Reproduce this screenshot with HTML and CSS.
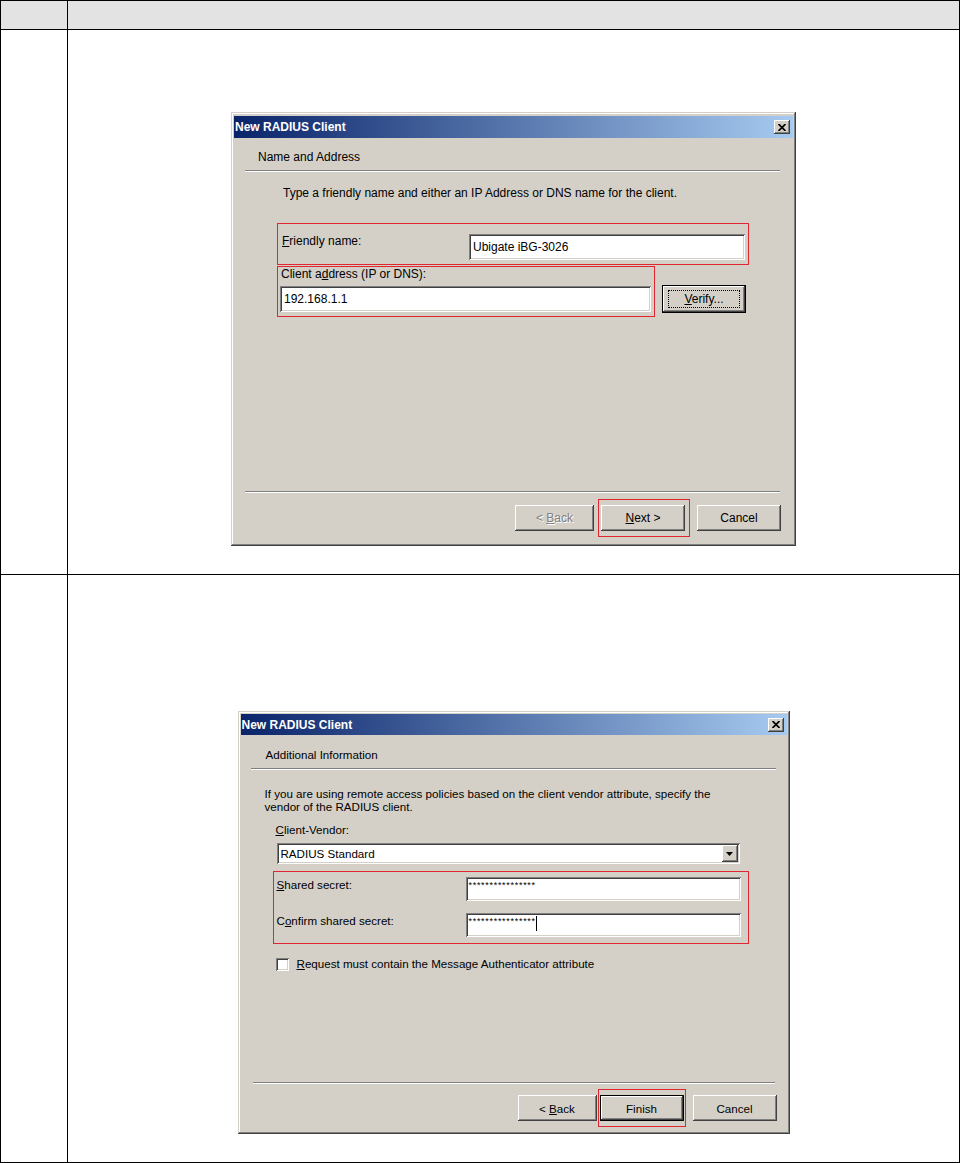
FILE: index.html
```html
<!DOCTYPE html>
<html lang="en">
<head>
    <meta charset="UTF-8">
    <title>New RADIUS Client</title>
    <link rel="stylesheet" href="styles.css">
</head>
<body>

    <div class="doc">
        <!-- Header row -->
        <div class="cell cell-no head"></div>
        <div class="cell head"></div>

        <!-- Step: name and address -->
        <div class="cell cell-no"></div>
        <div class="cell step step-addr">
            <div class="dialog dialog-addr">
                <div class="titlebar">
                    <span>New RADIUS Client</span>
                    <span class="close">
                        <svg width="8" height="7" viewBox="0 0 8 7"><path d="M0.5 0 L7.5 7 M7.5 0 L0.5 7" stroke="#000" stroke-width="1.7"/></svg>
                    </span>
                </div>
                <div class="wiz-head">Name and Address</div>
                <div class="etched"></div>

                <p class="intro">Type a friendly name and either an IP Address or DNS name for the client.</p>

                <div class="mark mark-name">
                    <span class="label"><u>F</u>riendly name:</span>
                    <div class="field field-name">Ubigate iBG-3026</div>
                </div>

                <div class="addr-row">
                    <div class="mark mark-addr">
                        <span class="label">Client a<u>d</u>dress (IP or DNS):</span>
                        <div class="field field-addr">192.168.1.1</div>
                    </div>
                    <button class="btn btn-default btn-verify"><span class="focus-ring"><span><u>V</u>erify...</span></span></button>
                </div>

                <div class="spacer"></div>
                <div class="etched etched-foot"></div>
                <div class="buttons">
                    <button class="btn btn-back" disabled><span>&lt; <u>B</u>ack</span></button>
                    <span class="mark mark-btn mark-next"><button class="btn btn-wide"><span><u>N</u>ext &gt;</span></button></span>
                    <button class="btn btn-wide btn-cancel"><span>Cancel</span></button>
                </div>
            </div>
        </div>

        <!-- Step: additional information -->
        <div class="cell cell-no last"></div>
        <div class="cell step step-info last">
            <div class="dialog dialog-info">
                <div class="titlebar">
                    <span>New RADIUS Client</span>
                    <span class="close">
                        <svg width="8" height="7" viewBox="0 0 8 7"><path d="M0.5 0 L7.5 7 M7.5 0 L0.5 7" stroke="#000" stroke-width="1.7"/></svg>
                    </span>
                </div>
                <div class="wiz-head">Additional Information</div>
                <div class="etched"></div>

                <p class="desc">If you are using remote access policies based on the client vendor attribute, specify the<br>vendor of the RADIUS client.</p>

                <div class="vendor-label"><u>C</u>lient-Vendor:</div>
                <div class="field select">
                    <span>RADIUS Standard</span>
                    <span class="select-arrow">
                        <svg width="7" height="4" viewBox="0 0 7 4"><path d="M0 0 H7 L3.5 4 Z" fill="#000"/></svg>
                    </span>
                </div>

                <div class="mark mark-secret">
                    <div class="secret-row">
                        <span class="label"><u>S</u>hared secret:</span>
                        <div class="field field-secret"><span class="dots">****************</span></div>
                    </div>
                    <div class="secret-row">
                        <span class="label">C<u>o</u>nfirm shared secret:</span>
                        <div class="field field-secret"><span class="dots">****************</span><span class="caret"></span></div>
                    </div>
                </div>

                <div class="check-row">
                    <span class="checkbox"></span>
                    <span class="label"><u>R</u>equest must contain the Message Authenticator attribute</span>
                </div>

                <div class="spacer"></div>
                <div class="etched etched-foot"></div>
                <div class="buttons">
                    <button class="btn btn-back"><span>&lt; <u>B</u>ack</span></button>
                    <span class="mark mark-btn mark-finish"><button class="btn btn-wide btn-default"><span>Finish</span></button></span>
                    <button class="btn btn-wide btn-cancel"><span>Cancel</span></button>
                </div>
            </div>
        </div>
    </div>

</body>
</html>
```

FILE: styles.css
```css
* {
    box-sizing: border-box;
}

html, body {
    margin: 0;
    height: 100%;
}

body {
    background: #fff;
    color: #000;
    font-family: "Liberation Sans", Arial, sans-serif;
    font-size: 12px;
}

p {
    margin: 0;
}

/*--------------------
Table
--------------------*/
.doc {
    display: grid;
    grid-template-columns: 67px 1fr;
    grid-template-rows: 29px 545px 1fr;
    width: 960px;
    height: 1163px;
    border: 1px solid #000;
}

.cell {
    border-bottom: 1px solid #000;
}

.cell-no {
    border-right: 1px solid #000;
}

.head {
    background: #e3e3e3;
}

.last {
    border-bottom: none;
}

.step {
    display: flex;
    flex-direction: column;
    align-items: center;
}

.step-addr {
    padding-top: 82px;
}

.step-info {
    padding-top: 136px;
}

/*--------------------
Dialog window
--------------------*/
.dialog {
    display: flex;
    flex-direction: column;
    background: #d4d0c8;
    padding: 4px 3px 3px;
    box-shadow: inset -1px -1px #404040, inset 1px 1px #d4d0c8, inset -2px -2px #808080, inset 2px 2px #fff;
}

.dialog-addr {
    width: 565px;
    height: 434px;
}

.dialog-info {
    width: 552px;
    height: 423px;
    padding-top: 3px;
    font-size: 11.6px;
}

.titlebar {
    display: flex;
    align-items: center;
    justify-content: space-between;
    height: 22px;
    padding: 0 3px 0 1px;
    background: linear-gradient(to right, #0a246a, #a6caf0);
    color: #fff;
    font-size: 12px;
    font-weight: bold;
}

.dialog-info .titlebar {
    height: 21px;
}

.close {
    display: flex;
    align-items: center;
    justify-content: center;
    width: 16px;
    height: 14px;
    background: #d4d0c8;
    box-shadow: inset -1px -1px #404040, inset 1px 1px #fff, inset -2px -2px #808080;
}

.wiz-head {
    line-height: 14px;
    padding: 12px 0 6px 24px;
}

.dialog-info .wiz-head {
    padding: 13px 0 6px 25px;
}

.etched {
    height: 2px;
    margin: 0 13px 0 11px;
    border-top: 1px solid #808080;
    border-bottom: 1px solid #fff;
}

.dialog-info .etched {
    margin: 0 11px 0 10px;
}

.dialog-info .etched-foot {
    margin: 0 12px;
}

.spacer {
    flex: 1;
}

.label {
    line-height: 14px;
}

/* red annotation boxes */
.mark {
    border: 1px solid #e0262e;
}

/*--------------------
Controls
--------------------*/
.field {
    display: flex;
    align-items: center;
    padding: 0 4px;
    background: #fff;
    box-shadow: inset 1px 1px #808080, inset -1px -1px #fff, inset 2px 2px #404040, inset -2px -2px #d4d0c8;
}

.btn {
    display: flex;
    align-items: center;
    justify-content: center;
    height: 26px;
    padding: 0;
    border: none;
    background: #d4d0c8;
    color: #000;
    font: inherit;
    box-shadow: inset -1px -1px #404040, inset 1px 1px #fff, inset -2px -2px #808080, inset 2px 2px #d4d0c8;
}

.btn-default {
    box-shadow: inset 0 0 0 1px #000, inset -2px -2px #404040, inset 2px 2px #fff, inset -3px -3px #808080;
}

.btn:disabled {
    color: #808080;
    text-shadow: 1px 1px #fff;
}

.btn-back {
    width: 79px;
}

.btn-wide {
    width: 84px;
}

/*--------------------
Name and Address
--------------------*/
.intro {
    margin: 14px 0 0 49px;
    line-height: 14px;
}

.mark-name {
    display: flex;
    align-items: flex-start;
    width: 472px;
    height: 42px;
    margin: 23px 0 0 43px;
    padding: 10px 3px 4px 4px;
}

.mark-name .label {
    flex: 1;
}

.field-name {
    width: 276px;
    height: 26px;
}

.addr-row {
    display: flex;
    align-items: flex-start;
    margin: 1px 0 0 43px;
}

.mark-addr {
    width: 378px;
    padding: 0 3px 4px 2px;
}

.mark-addr .label {
    display: block;
    padding-left: 1px;
    margin-bottom: 5px;
}

.field-addr {
    width: 371px;
    height: 26px;
}

.btn-verify {
    width: 84px;
    height: 28px;
    margin: 19px 0 0 7px;
}

.focus-ring {
    display: flex;
    align-items: center;
    justify-content: center;
    width: 72px;
    height: 18px;
    border: 1px dotted #000;
}

.buttons {
    display: flex;
    justify-content: flex-end;
    align-items: flex-start;
    margin: 12px 0 12px;
    padding-right: 12px;
}

.btn-back {
    margin-right: 7px;
}

.mark-btn {
    display: flex;
}

.mark-next {
    padding: 5px 4px 5px 2px;
    margin: -6px -5px -6px -3px;
}

.btn-cancel {
    margin-left: 12px;
}

/*--------------------
Additional Information
--------------------*/
.dialog-info .buttons {
    margin: 11px 0 10px;
    padding-right: 10px;
}

.dialog-info .btn-back {
    margin-right: 3px;
}

.dialog-info .btn-cancel {
    margin-left: 9px;
}

.mark-finish {
    padding: 5px 1px;
    margin: -6px -2px;
}

.desc {
    margin: 17px 0 0 24px;
    line-height: 13px;
}

.vendor-label {
    margin: 10px 0 0 35px;
    line-height: 14px;
}

.select {
    justify-content: space-between;
    width: 463px;
    height: 21px;
    margin: 6px 0 0 36px;
    padding: 2px 2px 2px 4px;
}

.select-arrow {
    display: flex;
    align-items: center;
    justify-content: center;
    width: 16px;
    height: 17px;
    background: #d4d0c8;
    box-shadow: inset -1px -1px #404040, inset 1px 1px #fff, inset -2px -2px #808080;
}

.mark-secret {
    display: flex;
    flex-direction: column;
    gap: 12px;
    width: 476px;
    height: 73px;
    margin: 7px 0 0 32px;
    padding: 5px 7px 5px 3px;
}

.secret-row {
    display: flex;
    align-items: flex-start;
}

.secret-row .label {
    flex: 1;
    padding-top: 1px;
}

.field-secret {
    align-items: flex-start;
    width: 275px;
    height: 24px;
    padding: 3px 3px 0;
}

.dots {
    font-size: 9px;
    line-height: 9px;
    letter-spacing: 0.7px;
    margin-top: 1px;
}

.caret {
    width: 1px;
    height: 15px;
    background: #000;
}

.check-row {
    display: flex;
    align-items: center;
    gap: 8px;
    margin: 13px 0 0 35px;
}

.checkbox {
    width: 13px;
    height: 13px;
    background: #fff;
    box-shadow: inset 1px 1px #808080, inset -1px -1px #fff, inset 2px 2px #404040, inset -2px -2px #d4d0c8;
}
```
